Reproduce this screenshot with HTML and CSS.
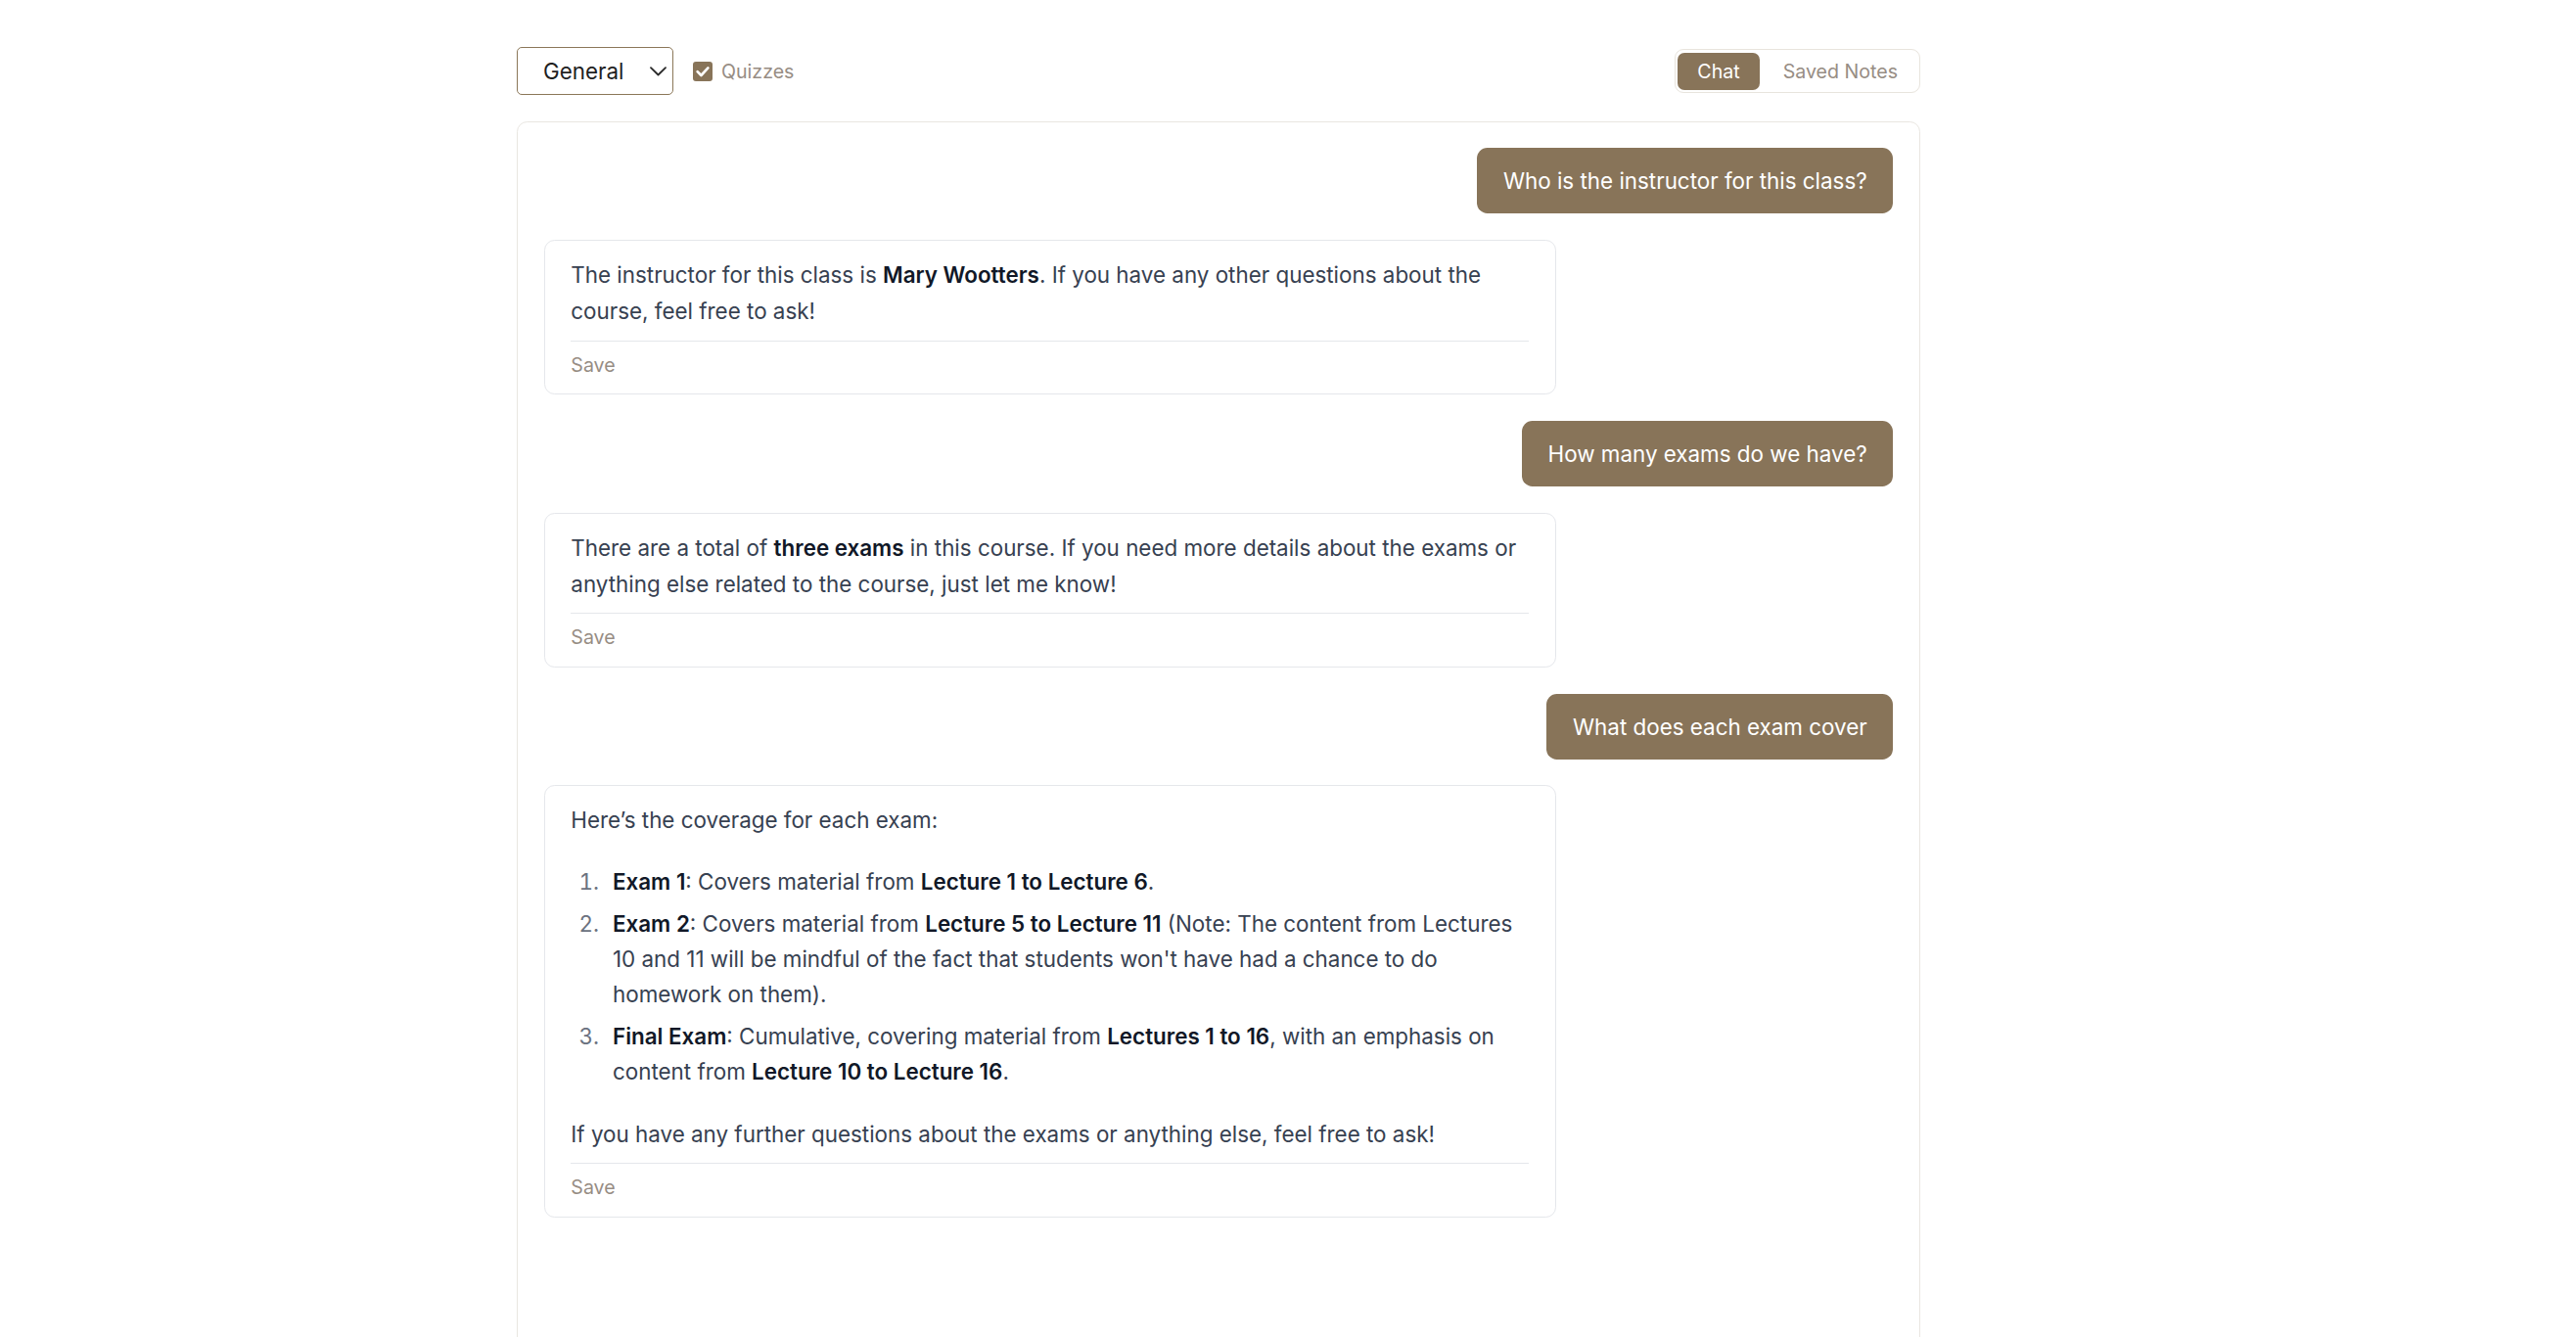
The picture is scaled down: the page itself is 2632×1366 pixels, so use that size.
FILE: index.html
```html
<!DOCTYPE html>
<html lang="en">
<head>
<meta charset="utf-8">
<title>Chat</title>
<link rel="stylesheet" href="styles.css">
</head>
<body>
<div class="main">
  <div class="toolbar">
    <div class="left-tools">
      <div class="select">
        <span>General</span>
        <svg class="chev" viewBox="0 0 17 10" width="17" height="10"><path d="M1 1.2 L8.5 8.5 L16 1.2" fill="none" stroke="#2a2a2a" stroke-width="1.8" stroke-linecap="round" stroke-linejoin="round"/></svg>
      </div>
      <label class="check-label">
        <span class="checkbox"><svg viewBox="0 0 20 20" width="20" height="20"><path d="M4.6 10.2 L8.4 14 L15.4 6.4" fill="none" stroke="#fff" stroke-width="2.6" stroke-linecap="round" stroke-linejoin="round"/></svg></span>
        <span>Quizzes</span>
      </label>
    </div>
    <div class="toggle">
      <div class="tab active">Chat</div>
      <div class="tab">Saved Notes</div>
    </div>
  </div>

  <div class="chat">
    <div class="user">Who is the instructor for this class?</div>
    <div class="bot">
      <div class="prose">
        <p>The instructor for this class is <strong>Mary Wootters</strong>. If you have any other questions about the course, feel free to ask!</p>
      </div>
      <div class="actions">Save</div>
    </div>

    <div class="user">How many exams do we have?</div>
    <div class="bot">
      <div class="prose">
        <p>There are a total of <strong>three exams</strong> in this course. If you need more details about the exams or anything else related to the course, just let me know!</p>
      </div>
      <div class="actions">Save</div>
    </div>

    <div class="user">What does each exam cover</div>
    <div class="bot">
      <div class="prose">
        <p>Here’s the coverage for each exam:</p>
        <ol>
          <li><strong>Exam 1</strong>: Covers material from <strong>Lecture 1 to Lecture 6</strong>.</li>
          <li><strong>Exam 2</strong>: Covers material from <strong>Lecture 5 to Lecture 11</strong> (Note: The content from Lectures 10 and 11 will be mindful of the fact that students won't have had a chance to do homework on them).</li>
          <li><strong>Final Exam</strong>: Cumulative, covering material from <strong>Lectures 1 to 16</strong>, with an emphasis on content from <strong>Lecture 10 to Lecture 16</strong>.</li>
        </ol>
        <p>If you have any further questions about the exams or anything else, feel free to ask!</p>
      </div>
      <div class="actions">Save</div>
    </div>
  </div>
</div>
</body>
</html>
```

FILE: styles.css
```css
* { box-sizing: border-box; }
html, body { margin: 0; background: #ffffff; }
body {
  font-family: Inter, "Noto Sans", "Liberation Sans", sans-serif;
  color: #374151;
}
.main {
  margin-left: 528px;
  width: 1434px;
  padding-top: 48px;
}
.toolbar {
  display: flex;
  justify-content: space-between;
  align-items: center;
  height: 49px;
}
.left-tools {
  display: flex;
  align-items: center;
  gap: 20px;
}
.select {
  width: 160px;
  height: 49px;
  border: 1px solid #8b7759;
  border-radius: 5px;
  display: flex;
  align-items: center;
  justify-content: space-between;
  padding: 0 6px 0 26px;
  font-size: 22.4px;
  color: #1f1f1f;
}
.chev { display: block; }
.check-label {
  display: flex;
  align-items: center;
  gap: 9px;
  font-size: 19.6px;
  color: #978d84;
}
.checkbox {
  width: 20px;
  height: 20px;
  border-radius: 3px;
  background: #887459;
  display: flex;
  align-items: center;
  justify-content: center;
}
.checkbox svg { display: block; }
.toggle {
  display: flex;
  gap: 4px;
  border: 1px solid #e8e4dd;
  border-radius: 9px;
  padding: 2.5px 2px;
}
.tab {
  height: 38px;
  padding: 0 20px;
  display: flex;
  align-items: center;
  font-size: 19.6px;
  color: #978d84;
  border-radius: 7px;
}
.tab.active {
  background: #887459;
  color: #ffffff;
}
.chat {
  margin-top: 26.67px;
  border: 1px solid #e9e6e1;
  border-radius: 10.67px;
  padding: 26.67px;
  display: flex;
  flex-direction: column;
  gap: 26.67px;
  min-height: 1400px;
}
.user {
  align-self: flex-end;
  background: #887459;
  color: #ffffff;
  font-size: 22.4px;
  line-height: 35px;
  padding: 16px 26.67px;
  border-radius: 10.67px;
}
.bot {
  align-self: flex-start;
  max-width: 75%;
  border: 1px solid #e5e7eb;
  border-radius: 10.67px;
  padding: 16px 26.67px;
}
.prose {
  font-size: 22.4px;
  line-height: 37.33px;
  color: #374151;
}
.prose p { margin: 26.67px 0; }
.prose > :first-child { margin-top: 0; }
.prose > :last-child { margin-bottom: 0; }
.prose ol {
  margin: 26.67px 0;
  padding-left: 34.67px;
}
.prose li {
  margin: 7px 0;
  padding-left: 8px;
  line-height: 36px;
}
.prose li::marker { color: #6b7280; }
.prose strong { color: #111827; font-weight: 600; }
.actions {
  margin-top: 11px;
  padding-top: 11px;
  border-top: 1px solid #e5e7eb;
  font-size: 19.6px;
  line-height: 26.67px;
  color: #978d84;
}
```
